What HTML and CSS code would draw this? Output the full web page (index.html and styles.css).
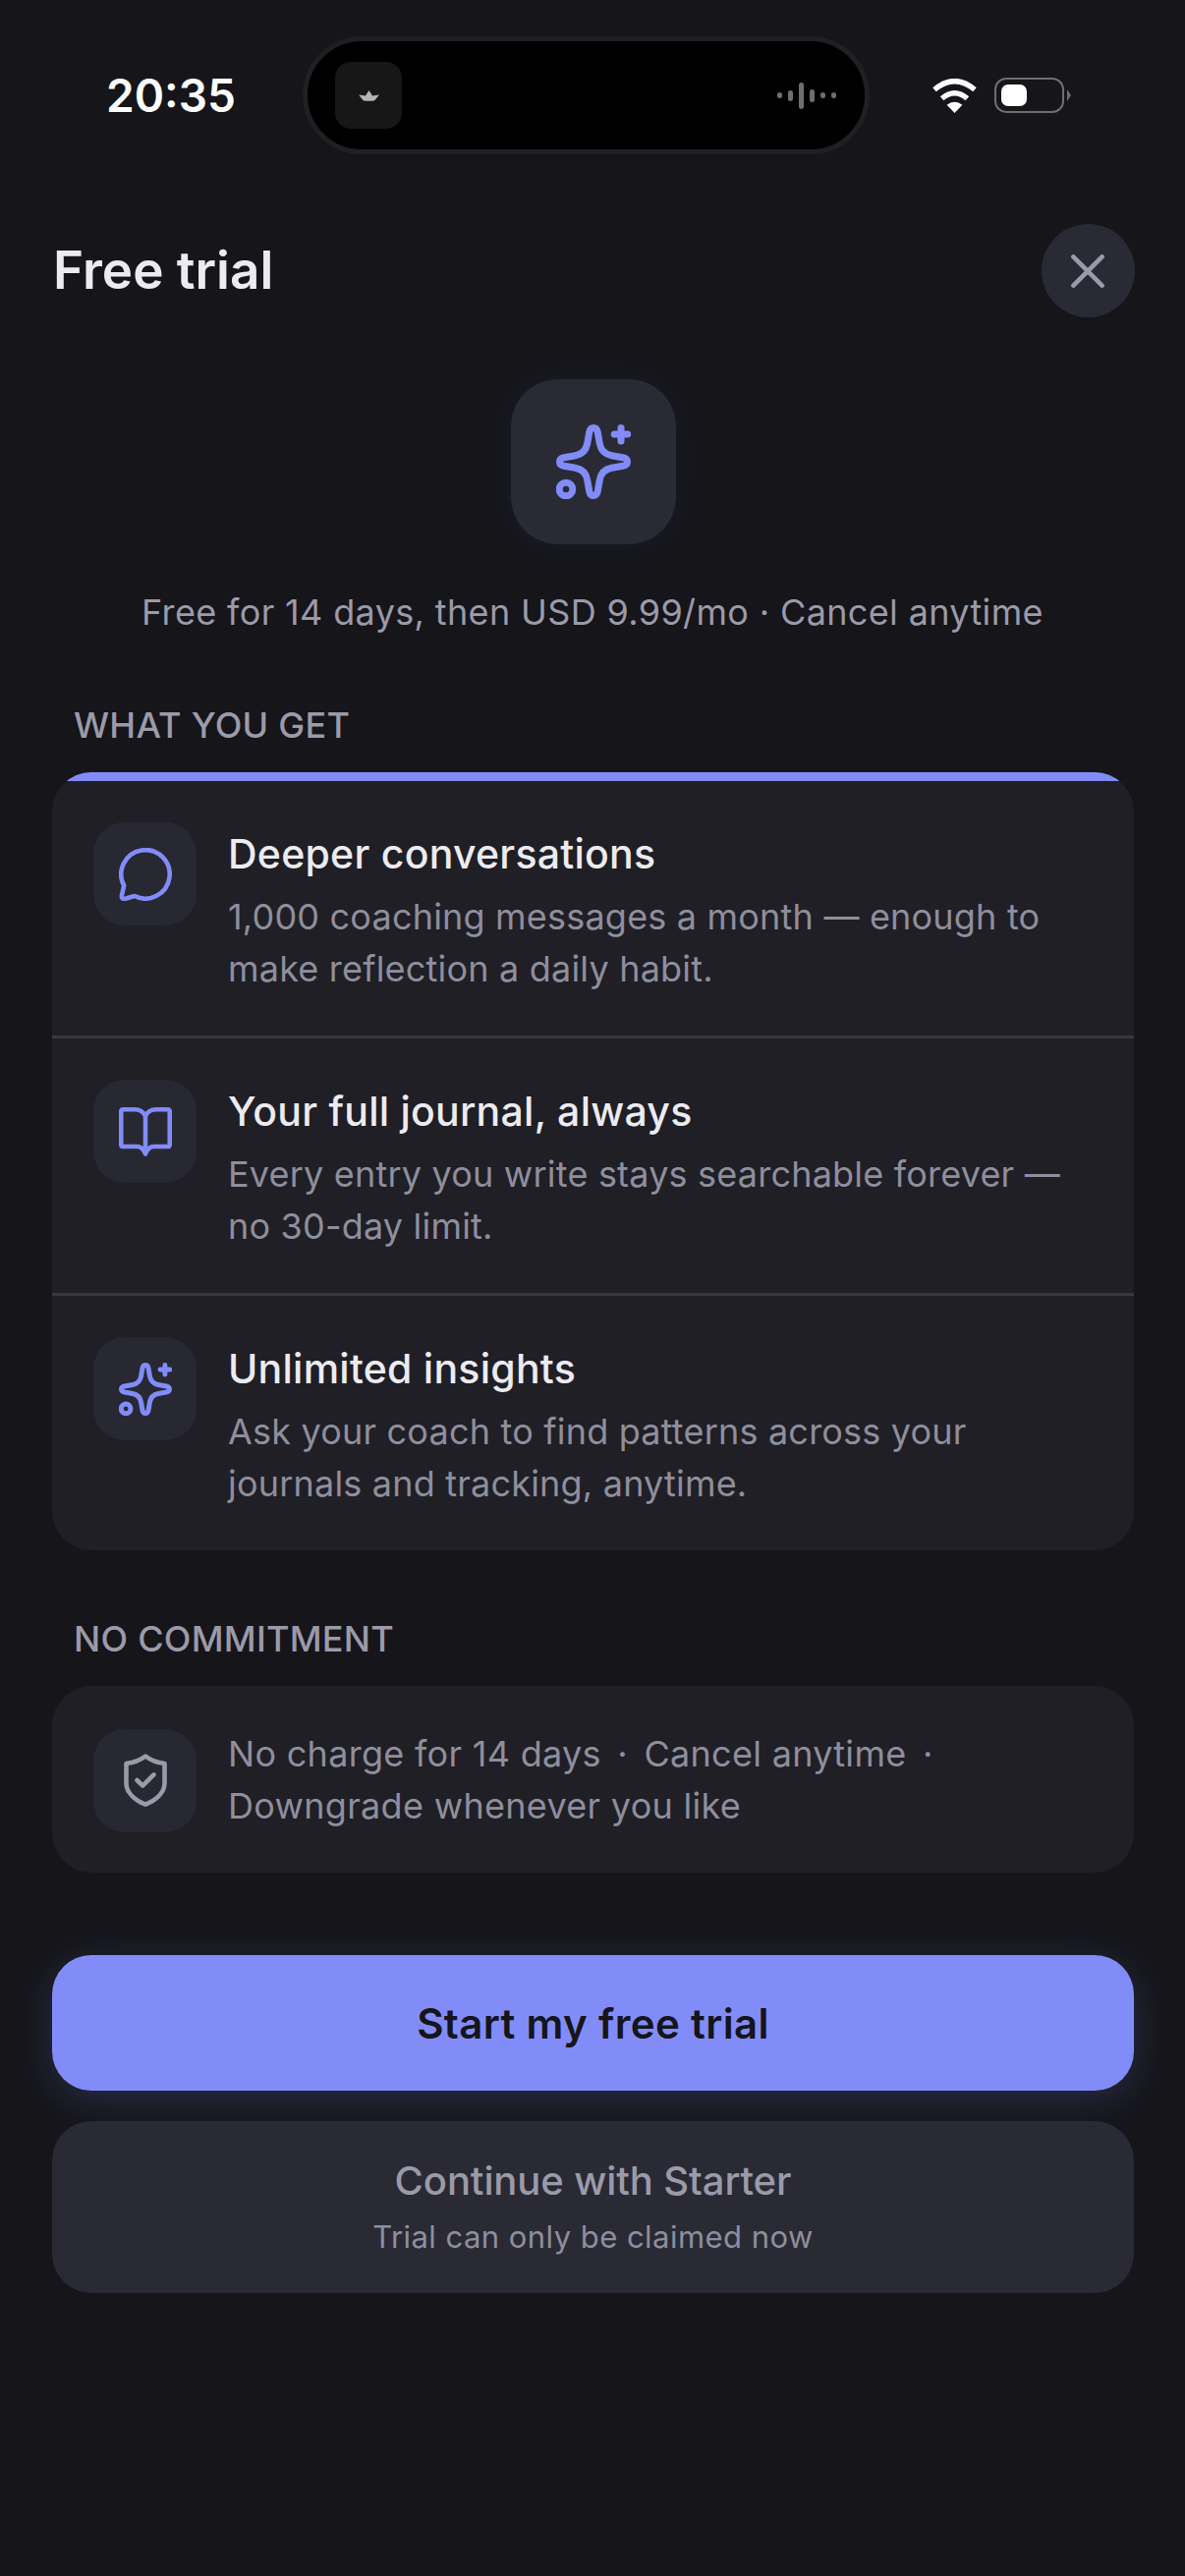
FILE: index.html
```html
<!DOCTYPE html>
<html>
<head>
	<title>Free trial</title>
	<meta name="viewport" content="width=device-width, initial-scale=1.0">
	<link rel="stylesheet" href="styles.css">
</head>
<body>

	<svg class="defs" width="0" height="0">
		<symbol id="sparkle" viewBox="-38 -38 76 76">
			<path d="M0 -34.5C2.6 -34.5 3.8 -32.6 4.3 -30L6.3 -18.5C7.5 -12 12 -7.5 18.5 -6.3L30 -4.3C32.6 -3.8 34.5 -2.6 34.5 0C34.5 2.6 32.6 3.8 30 4.3L18.5 6.3C12 7.5 7.5 12 6.3 18.5L4.3 30C3.8 32.6 2.6 34.5 0 34.5C-2.6 34.5 -3.8 32.6 -4.3 30L-6.3 18.5C-7.5 12 -12 7.5 -18.5 6.3L-30 4.3C-32.6 3.8 -34.5 2.6 -34.5 0C-34.5 -2.6 -32.6 -3.8 -30 -4.3L-18.5 -6.3C-12 -7.5 -7.5 -12 -6.3 -18.5L-4.3 -30C-3.8 -32.6 -2.6 -34.5 0 -34.5Z"/>
			<path d="M28 -34.5V-21M21.2 -28H34.8"/>
			<circle cx="-28" cy="28" r="6.8"/>
		</symbol>
	</svg>

	<div class="status">
		<span class="time">20:35</span>
		<div class="island">
			<div class="island-app">
				<svg width="21" height="11" viewBox="0 0 21 11"><path class="boat" d="M0 4.6L7 5.6L10.5 0L14 5.6L21 4.6L16 10.4Q10.5 11.2 5 10.4Z"/></svg>
			</div>
			<div class="wave">
				<i class="b6"></i><i class="b10"></i><i class="b26"></i><i class="b12"></i><i class="b6"></i><i class="b6"></i>
			</div>
		</div>
		<svg class="wifi" width="47" height="35" viewBox="0 0 47 35">
			<path class="wifi-fill" d="M23.5 35L15.6 26.8Q23.5 20.6 31.4 26.8Z"/>
			<path class="wifi-arc" d="M10.6 20.2Q23.5 9.4 36.4 20.2"/>
			<path class="wifi-arc" d="M3 11.2Q23.5 -6 44 11.2"/>
		</svg>
		<div class="battery">
			<div class="battery-level"></div>
		</div>
		<div class="battery-tip"></div>
	</div>

	<div class="header">
		<h1>Free trial</h1>
		<button class="close">
			<svg width="34" height="34" viewBox="0 0 34 34"><path d="M2.4 2.4L31.6 31.6M31.6 2.4L2.4 31.6"/></svg>
		</button>
	</div>

	<div class="hero">
		<div class="hero-icon">
			<svg class="line accent" width="76" height="76"><use href="#sparkle"/></svg>
		</div>
		<p>Free for 14 days, then USD 9.99/mo · Cancel anytime</p>
	</div>

	<h2 class="label">WHAT YOU GET</h2>
	<div class="card card-top">
		<div class="row">
			<div class="row-icon">
				<svg class="line accent thin" width="54" height="54" viewBox="-27 -27 54 54"><path d="M-21.8 11.5A24.7 24.7 0 1 1 -11 22L-20.5 24.8Q-25 25.5 -24 21Z"/></svg>
			</div>
			<div class="row-text">
				<h3>Deeper conversations</h3>
				<p>1,000 coaching messages a month — enough to make reflection a daily habit.</p>
			</div>
		</div>
		<div class="row">
			<div class="row-icon">
				<svg class="line accent thin" width="54" height="54" viewBox="-27 -27 54 54"><path d="M0 -16C-2 -20 -6 -22.75 -11 -22.75H-22.5Q-24.75 -22.75 -24.75 -20.5V12.75Q-24.75 15 -22.5 15H-9C-5 15 -2 17 0 22.5C2 17 5 15 9 15H22.5Q24.75 15 24.75 12.75V-20.5Q24.75 -22.75 22.5 -22.75H11C6 -22.75 2 -20 0 -16ZM0 -16V22.5"/></svg>
			</div>
			<div class="row-text">
				<h3>Your full journal, always</h3>
				<p>Every entry you write stays searchable forever — no 30-day limit.</p>
			</div>
		</div>
		<div class="row">
			<div class="row-icon">
				<svg class="line accent" width="54" height="54"><use href="#sparkle"/></svg>
			</div>
			<div class="row-text">
				<h3>Unlimited insights</h3>
				<p>Ask your coach to find patterns across your journals and tracking, anytime.</p>
			</div>
		</div>
	</div>

	<h2 class="label">NO COMMITMENT</h2>
	<div class="card">
		<div class="row row-note">
			<div class="row-icon">
				<svg class="line muted thin" width="54" height="54" viewBox="-27 -27 54 54"><path d="M0 -24.5C-5 -20.5 -11 -18 -19.5 -17V3C-19.5 13 -10 20.5 0 24.7C10 20.5 19.5 13 19.5 3V-17C11 -18 5 -20.5 0 -24.5ZM-8.5 0L-2.8 5.6L8.5 -5.6"/></svg>
			</div>
			<p class="note">No charge for 14 days <span class="sep">·</span> Cancel anytime <span class="sep">·</span> Downgrade whenever you like</p>
		</div>
	</div>

	<div class="actions">
		<button class="primary">Start my free trial</button>
		<button class="secondary">
			<span class="secondary-title">Continue with Starter</span>
			<span class="secondary-sub">Trial can only be claimed now</span>
		</button>
	</div>

</body>
</html>
```

FILE: styles.css
```css
*{
	box-sizing: border-box;
	font-family: 'Inter', sans-serif;
}
html,body{
	width: 100%;
	height: 100%;
}
body{
	margin: 0px;
	background: #15151a;
	overflow: hidden;
}
h1,h2,h3,p{
	margin: 0px;
}
button{
	border: none;
	outline: none;
	cursor: pointer;
}
.defs{
	display: block;
	height: 0px;
}

/* status bar */
.status{
	display: flex;
	align-items: center;
	height: 120px;
	margin-top: 37px;
	padding-left: 108px;
}
.time{
	width: 132px;
	color: white;
	font-size: 46px;
	font-weight: 600;
	line-height: 56px;
}
.island{
	width: 577px;
	height: 120px;
	margin-left: 68px;
	margin-right: 63px;
	padding: 0px 29px 0px 28px;
	display: flex;
	justify-content: space-between;
	align-items: center;
	background: black;
	border: 5px solid #1f2023;
	border-radius: 60px;
}
.island-app{
	width: 68px;
	height: 68px;
	display: flex;
	justify-content: center;
	align-items: center;
	background: #171717;
	border-radius: 16px;
}
.boat{
	fill: #b4b6b4;
}
.wave{
	display: flex;
	align-items: center;
	gap: 5.5px;
}
.wave i{
	width: 5.5px;
	background: #6e6e6e;
	border-radius: 3px;
}
.b6{ height: 6px; }
.b10{ height: 11px; }
.b12{ height: 13px; }
.b26{ height: 27px; }
.wifi{
	margin-right: 17px;
}
.wifi-fill{
	fill: white;
}
.wifi-arc{
	fill: none;
	stroke: white;
	stroke-width: 5.4;
	stroke-linecap: butt;
}
.battery{
	width: 71px;
	height: 36px;
	padding: 5px;
	border: 2.5px solid #6f6f70;
	border-radius: 12px;
}
.battery-level{
	width: 26px;
	height: 100%;
	background: white;
	border-radius: 7px;
}
.battery-tip{
	width: 4px;
	height: 12px;
	margin-left: 3px;
	background: #6f6f70;
	clip-path: polygon(0 0, 100% 50%, 0 100%);
}

/* title row */
.header{
	display: flex;
	justify-content: space-between;
	align-items: center;
	margin-top: 71px;
	padding: 0px 51px 0px 54px;
}
.header h1{
	margin-top: -2px;
	color: #ecebf1;
	font-size: 53px;
	font-weight: 600;
	line-height: 60px;
}
.close{
	width: 95px;
	height: 95px;
	display: flex;
	justify-content: center;
	align-items: center;
	padding: 0px;
	background: #2a2a35;
	border-radius: 50%;
}
.close svg{
	margin-right: 1px;
}
.close path{
	fill: none;
	stroke: #9b9aa9;
	stroke-width: 4.6;
	stroke-linecap: round;
}

/* shared icon strokes */
.line{
	fill: none;
	stroke-width: 7;
	stroke-linecap: round;
	stroke-linejoin: round;
}
.line.thin{
	stroke-width: 4.6;
}
.accent{
	stroke: #818cf8;
}
.muted{
	stroke: #9b9aa9;
}

.hero{
	display: flex;
	align-items: center;
	flex-direction: column;
	margin-top: 63px;
}
.hero-icon{
	width: 168px;
	height: 168px;
	margin-left: 2px;
	display: flex;
	justify-content: center;
	align-items: center;
	background: #2a2a35;
	border-radius: 48px;
	box-shadow: 0px 0px 40px rgba(129,140,248,0.06);
}
.hero p{
	margin-top: 47px;
	color: #9b9aa9;
	font-size: 36px;
	letter-spacing: 0.36px;
	line-height: 44px;
}

.label{
	padding: 0px 75px;
	color: #9b9aa9;
	font-size: 36px;
	font-weight: 500;
	letter-spacing: 0.25px;
	line-height: 40px;
}
.hero + .label{
	margin-top: 73px;
}
.card + .label{
	margin-top: 70px;
}

.card{
	margin: 28px 52px 0px 53px;
	background: #1f1f25;
	border-radius: 40px;
	overflow: hidden;
}
.card-top::before{
	content: "";
	display: block;
	height: 9px;
	background: #818cf8;
}
.row{
	display: flex;
	align-items: flex-start;
	gap: 32px;
	padding: 42px 42px 41px 42px;
	border-bottom: 3px solid #373742;
}
.row:last-child{
	border-bottom: none;
}
.row-icon{
	flex: 0 0 105px;
	height: 105px;
	display: flex;
	justify-content: center;
	align-items: center;
	background: #282833;
	border-radius: 32px;
}
.row-text{
	padding-top: 7px;
}
.row-text h3{
	color: #ecebf1;
	font-size: 41px;
	font-weight: 500;
	letter-spacing: 0.25px;
	line-height: 50px;
}
.row-text p{
	margin-top: 13px;
	color: #8f8e9d;
	font-size: 36px;
	letter-spacing: 0.2px;
	line-height: 53px;
}
.row-note{
	align-items: center;
	padding-top: 43px;
	padding-bottom: 41px;
}
.note{
	color: #8f8e9d;
	font-size: 36px;
	letter-spacing: 0.3px;
	line-height: 53px;
}
.sep{
	margin: 0px 6px;
}

.actions{
	display: flex;
	flex-direction: column;
	gap: 31px;
	margin: 84px 52px 0px 53px;
}
.primary{
	height: 138px;
	background: #828cf9;
	border-radius: 40px;
	color: #15151a;
	font-size: 42px;
	font-weight: 600;
	letter-spacing: 0.35px;
	box-shadow: 0px 8px 40px rgba(129,140,248,0.2);
}
.secondary{
	height: 175px;
	padding-bottom: 3px;
	display: flex;
	align-items: center;
	flex-direction: column;
	justify-content: center;
	background: #2a2a35;
	border-radius: 40px;
}
.secondary-title{
	color: #9b9aa9;
	font-size: 40px;
	font-weight: 500;
	letter-spacing: -0.1px;
	line-height: 48px;
}
.secondary-sub{
	margin-top: 14px;
	color: #8f8e9d;
	font-size: 31px;
	letter-spacing: 0.46px;
	line-height: 38px;
}
```
